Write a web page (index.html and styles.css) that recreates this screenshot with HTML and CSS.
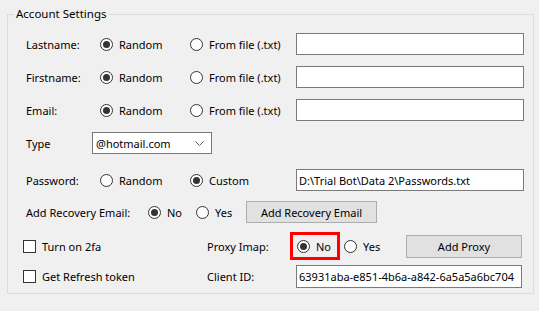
FILE: index.html
```html
<!DOCTYPE html>
<html lang="en">

<head>
  <meta charset="UTF-8">
  <title>Account Settings</title>
  <link rel="stylesheet" href="styles.css">
</head>

<body>
  <div class="window">
    <fieldset class="group">
      <legend>Account Settings</legend>
      <div class="rows">
        <div class="row">
          <span class="lbl w74">Lastname:</span>
          <label class="opt w90"><span class="radio checked"></span>Random</label>
          <label class="opt w106"><span class="radio"></span>From file (.txt)</label>
          <div class="field"></div>
        </div>
        <div class="row gap11">
          <span class="lbl w74">Firstname:</span>
          <label class="opt w90"><span class="radio checked"></span>Random</label>
          <label class="opt w106"><span class="radio"></span>From file (.txt)</label>
          <div class="field"></div>
        </div>
        <div class="row gap11">
          <span class="lbl w74">Email:</span>
          <label class="opt w90"><span class="radio checked"></span>Random</label>
          <label class="opt w106"><span class="radio"></span>From file (.txt)</label>
          <div class="field"></div>
        </div>
        <div class="row gap11">
          <span class="lbl w66">Type</span>
          <div class="combo">
            <span>@hotmail.com</span>
            <svg class="chevron" viewBox="0 0 9 5" width="9" height="5">
              <polyline points="0.5,0.5 4.5,4.5 8.5,0.5" fill="none" stroke="#606060" stroke-width="1" />
            </svg>
          </div>
        </div>
        <div class="row gap15">
          <span class="lbl w74">Password:</span>
          <label class="opt w90"><span class="radio"></span>Random</label>
          <label class="opt w106"><span class="radio checked"></span>Custom</label>
          <div class="field">D:\Trial Bot\Data 2\Passwords.txt</div>
        </div>
        <div class="row gap10">
          <span class="lbl w122">Add Recovery Email:</span>
          <label class="opt w48"><span class="radio checked"></span>No</label>
          <label class="opt w50"><span class="radio"></span>Yes</label>
          <button class="btn w131">Add Recovery Email</button>
        </div>
        <div class="row gap12 check">
          <label class="opt w184"><span class="box"></span>Turn on 2fa</label>
          <span class="lbl w83">Proxy Imap:</span>
          <label class="opt highlight"><span class="radio checked"></span>No</label>
          <label class="opt w62 after-hl"><span class="radio"></span>Yes</label>
          <button class="btn w116 tall">Add Proxy</button>
        </div>
        <div class="row gap8 check tall">
          <label class="opt w184"><span class="box"></span>Get Refresh token</label>
          <span class="lbl w89">Client ID:</span>
          <div class="field w226 tall">63931aba-e851-4b6a-a842-6a5a5a6bc704</div>
        </div>
      </div>
    </fieldset>
  </div>
</body>

</html>
```

FILE: styles.css
```css
body {
  margin: 0;
  background-color: #f0f0f0;
  font-family: "Noto Sans", Arial, sans-serif;
  font-size: 11px;
  color: #000;
}

.window {
  padding: 6px 0 0 7px;
}

.group {
  margin: 0;
  padding: 0 0 5px 0;
  width: 527px;
  box-sizing: border-box;
  border: 1px solid #dcdcdc;
}

.group legend {
  margin-left: 6px;
  padding: 0 2px;
  line-height: 16px;
  font-size: 11.5px;
}

.rows {
  display: flex;
  flex-direction: column;
  padding: 11px 0 0 18px;
}

.row {
  display: flex;
  align-items: center;
  height: 22px;
}

.row.tall {
  height: 23px;
}

.row.check {
  margin-left: -3px;
}

.gap8 { margin-top: 8px; }
.gap10 { margin-top: 10px; }
.gap11 { margin-top: 11px; }
.gap12 { margin-top: 12px; }
.gap15 { margin-top: 15px; }

.lbl {
  white-space: nowrap;
}

.w48 { width: 48px; }
.w50 { width: 50px; }
.w62 { width: 62px; }
.w66 { width: 66px; }
.w74 { width: 74px; }
.w83 { width: 83px; }
.w89 { width: 89px; }
.w90 { width: 90px; }
.w106 { width: 106px; }
.w116 { width: 116px; }
.w122 { width: 122px; }
.w131 { width: 131px; }
.w184 { width: 184px; }

.opt {
  display: flex;
  align-items: center;
  white-space: nowrap;
  flex-shrink: 0;
}

.radio {
  width: 13px;
  height: 13px;
  box-sizing: border-box;
  border: 1px solid #333;
  border-radius: 50%;
  margin-right: 6px;
  display: flex;
  align-items: center;
  justify-content: center;
  background: #fff;
}

.radio.checked::after {
  content: "";
  width: 7px;
  height: 7px;
  border-radius: 50%;
  background: #333;
}

.box {
  width: 13px;
  height: 13px;
  box-sizing: border-box;
  border: 1px solid #333;
  background: #fff;
  margin-right: 6px;
}

.highlight {
  width: 50px;
  height: 28px;
  box-sizing: border-box;
  border: 3px solid #ff0000;
  padding-left: 4px;
}

.after-hl {
  margin-left: 4px;
}

.field {
  width: 228px;
  height: 22px;
  box-sizing: border-box;
  border: 1px solid #7a7a7a;
  background: #fff;
  padding: 0 2px;
  display: flex;
  align-items: center;
  white-space: nowrap;
  overflow: hidden;
  flex-shrink: 0;
}

.field.w226 {
  width: 226px;
}

.field.tall {
  height: 23px;
}

.combo {
  width: 120px;
  height: 22px;
  box-sizing: border-box;
  border: 1px solid #7a7a7a;
  background: #fff;
  padding: 0 7px 0 3px;
  display: flex;
  align-items: center;
  justify-content: space-between;
}

.btn {
  height: 22px;
  box-sizing: border-box;
  border: 1px solid #adadad;
  background: #e1e1e1;
  font: inherit;
  color: #000;
  padding: 0;
  flex-shrink: 0;
}

.btn.tall {
  height: 23px;
}
```
